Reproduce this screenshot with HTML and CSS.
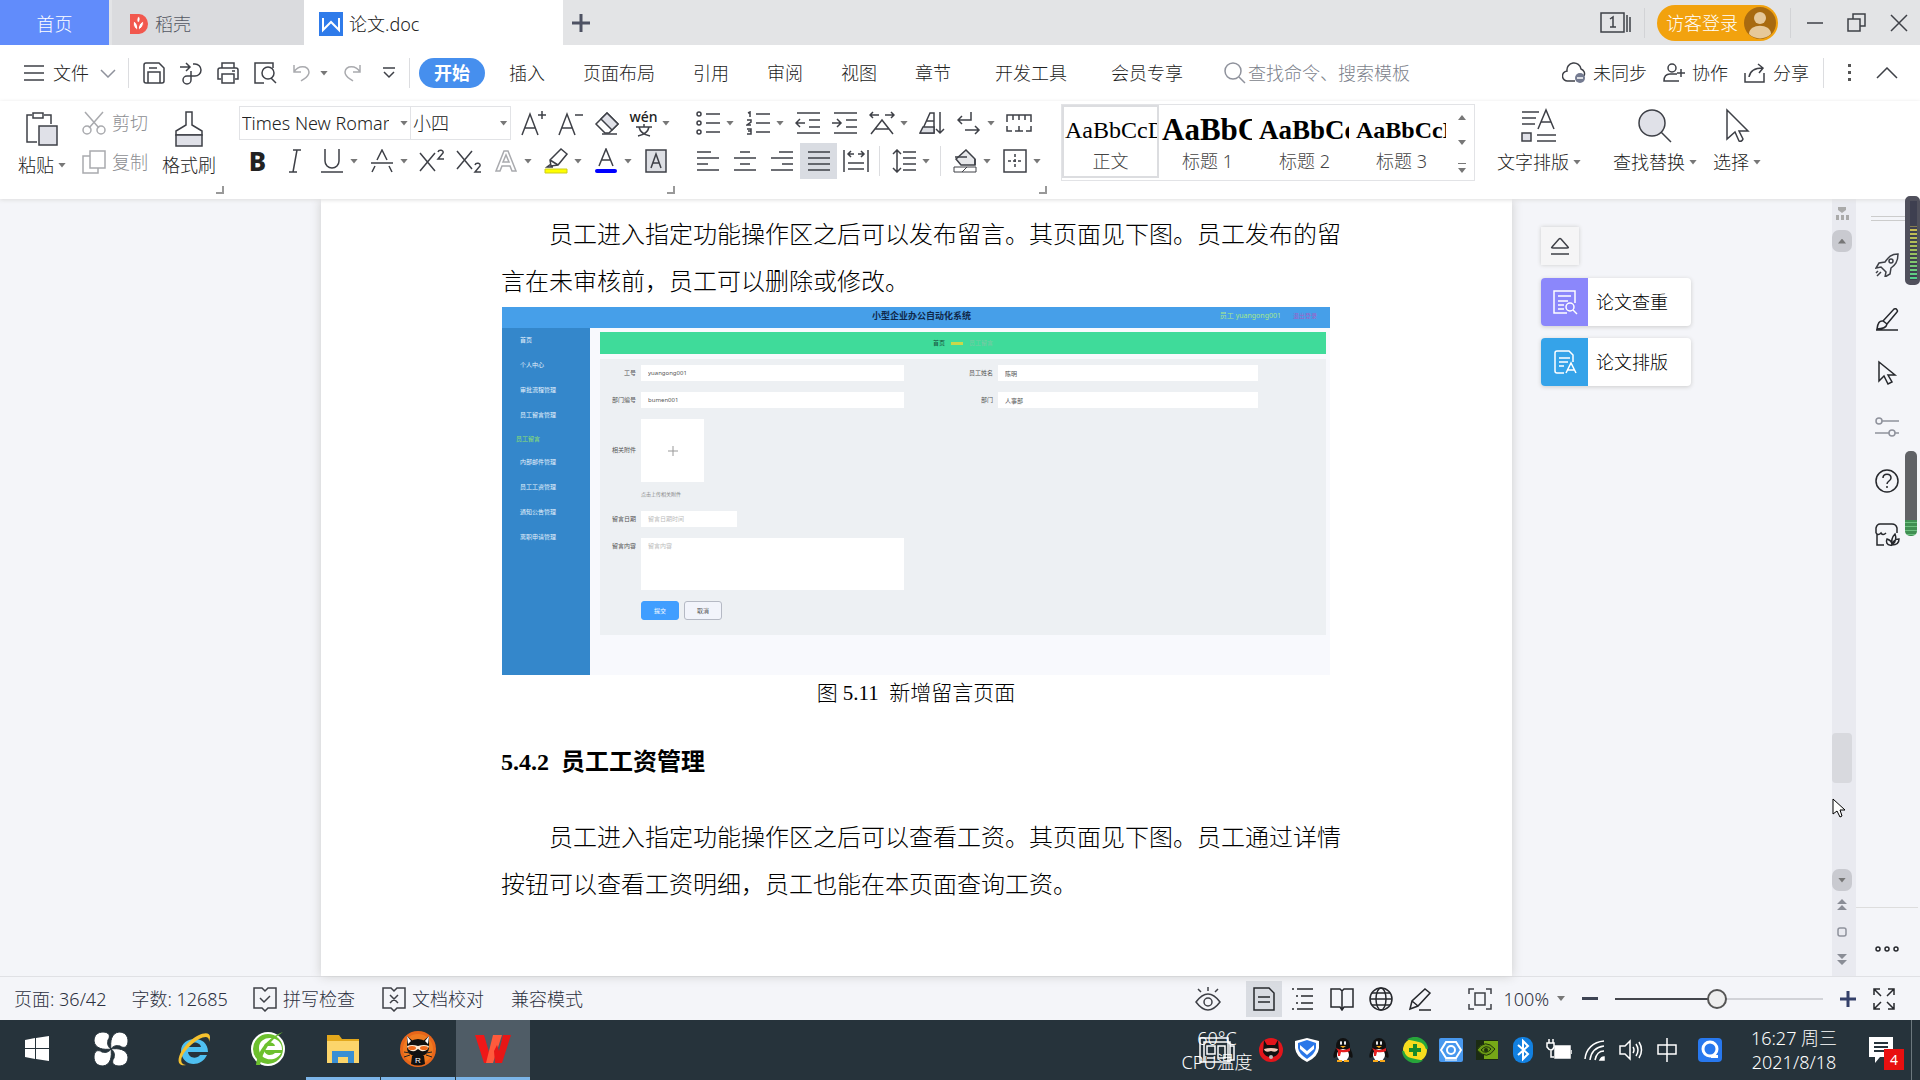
FILE: index.html
```html
<!DOCTYPE html>
<html lang="zh-CN">
<head>
  <meta charset="utf-8">
  <title>论文.doc</title>
  <link rel="stylesheet" href="styles.css">
</head>
<body>
  <header class="titlebar">
    <a class="tab tab-home" href="#">首页</a>
    <a class="tab tab-docer" href="#">
      <svg width="20" height="22" viewBox="0 0 20 22"><path d="M1 1h9a9 10 0 0 1 0 20H1z" fill="#f2584e"/><path d="M9 19V9M9 17c-5-2-5-6-4-9 3 2 4 5 4 9zM9 17c5-2 6-6 5-9-3 2-5 5-5 9zM9 10c-2-3-1-5 1-7 2 3 1 5-1 7z" fill="#fff" stroke="#f2584e"/></svg>
      稻壳
    </a>
    <a class="tab tab-doc" href="#">
      <svg width="24" height="24" viewBox="0 0 24 24"><path d="M0 0h24v24H0z" fill="#2f7bea"/><path d="M4 6v12l8-8 8 8V6" fill="none" stroke="#fff" stroke-width="2"/></svg>
      论文.doc
    </a>
    <button class="new-tab" aria-label="新建"><svg width="18" height="18" viewBox="0 0 18 18"><path d="M9 0v18M0 9h18" stroke="#4e5263" stroke-width="3"/></svg></button>
    <div class="window-tools">
      <button aria-label="窗口"><svg class="line" width="32" height="24" viewBox="0 0 32 24"><path d="M1 2h23v19H1zM27 4v17M30 6v15M10 8l3-2v10M10 16h6"/></svg></button>
      <span class="divider"></span>
      <button class="login">访客登录
        <svg width="32" height="32" viewBox="0 0 32 32"><circle cx="16" cy="16" r="16" fill="#a86a10"/><circle cx="16" cy="11" r="6" fill="#e6c89a"/><path d="M5 27c0-11 22-11 22 0a16 16 0 0 1-22 0z" fill="#e6c89a"/></svg>
      </button>
      <span class="divider"></span>
      <button class="win" aria-label="最小化"><svg class="line" width="18" height="18" viewBox="0 0 18 18"><path d="M1 9h16"/></svg></button>
      <button class="win" aria-label="还原"><svg class="line" width="20" height="20" viewBox="0 0 20 20"><path d="M1 6h12v12H1zM6 6V1h12v12h-5"/></svg></button>
      <button class="win" aria-label="关闭"><svg class="line" width="18" height="18" viewBox="0 0 18 18"><path d="M1 1l16 16M17 1L1 17"/></svg></button>
    </div>
  </header>

  <nav class="menubar">
    <button class="file">
      <svg class="line" width="22" height="18" viewBox="0 0 22 18"><path d="M1 2h20M1 9h20M1 16h20"/></svg>
      文件
      <svg class="line pale" width="16" height="9" viewBox="0 0 16 9"><path d="M1 1l7 7 7-7"/></svg>
    </button>
    <span class="divider"></span>
    <div class="quick">
      <button class="tool" aria-label="保存"><svg class="line" width="24" height="24" viewBox="0 0 24 24"><path d="M2 4q0-2 2-2h13l5 5v13q0 2-2 2H4q-2 0-2-2zM6 22v-11h12v11M7 7h8"/></svg></button>
      <button class="tool" aria-label="输出"><svg class="line" width="24" height="24" viewBox="0 0 24 24"><path d="M1 6h9M7 2l4 4-4 4M14 3h2a6 6 0 0 1 0 12H8a4 4 0 1 0 4 4v-9"/></svg></button>
      <button class="tool" aria-label="打印"><svg class="line" width="24" height="24" viewBox="0 0 24 24"><path d="M6 7V2h12v5M5 18H2V9q0-2 2-2h16q2 0 2 2v9h-3M6 13h12v9H6zM16 10h3"/></svg></button>
      <button class="tool" aria-label="打印预览"><svg class="line" width="24" height="24" viewBox="0 0 24 24"><path d="M20 7V2H2v20h9"/><circle cx="15" cy="12" r="6"/><path d="M18 17l5 5"/></svg></button>
      <button class="tool" aria-label="撤销"><svg class="line faint" width="20" height="20" viewBox="0 0 20 20"><path d="M2 2v7h7M2 9c4-7 14-7 15 0 0 5-4 6-8 9"/></svg></button><i class="caret"></i>
      <button class="tool" aria-label="恢复"><svg class="line faint" width="20" height="20" viewBox="0 0 20 20"><path d="M18 2v7h-7M18 9C14 2 4 2 3 9c0 5 4 6 8 9"/></svg></button>
      <button class="tool" aria-label="更多"><svg class="line" width="14" height="12" viewBox="0 0 14 12"><path d="M1 1h12M2 5l5 5 5-5"/></svg></button>
    </div>
    <span class="divider"></span>
    <div class="menus">
      <a class="active" href="#">开始</a>
      <a href="#">插入</a>
      <a href="#">页面布局</a>
      <a href="#">引用</a>
      <a href="#">审阅</a>
      <a href="#">视图</a>
      <a href="#">章节</a>
      <a class="wide" href="#">开发工具</a>
      <a class="wide" href="#">会员专享</a>
    </div>
    <label class="search">
      <svg class="line pale" width="22" height="22" viewBox="0 0 22 22"><circle cx="9" cy="9" r="8"/><path d="M15 15l6 6"/></svg>
      <input type="text" placeholder="查找命令、搜索模板" aria-label="查找命令">
    </label>
    <div class="share">
      <button><svg class="line" width="24" height="22" viewBox="0 0 24 22"><path d="M13 19H6A5 5 0 0 1 5 9a7 7 0 0 1 14-2 5 5 0 0 1 3 7"/><circle cx="18" cy="16" r="5" fill="#747b91" stroke="none"/><path d="M15 16h6" stroke="#fff"/></svg>未同步</button>
      <button><svg class="line" width="22" height="20" viewBox="0 0 22 20"><circle cx="9" cy="5" r="4"/><path d="M16 18H1q0-7 6-7h7M18 6v8M14 10h8"/></svg>协作</button>
      <button><svg class="line" width="22" height="20" viewBox="0 0 22 20"><path d="M1 10v9h19v-9M5 14c1-7 7-9 14-9M14 1l5 4-4 5"/></svg>分享</button>
    </div>
    <span class="divider"></span>
    <button class="dots" aria-label="选项"><svg width="4" height="18" viewBox="0 0 4 18"><path d="M0 0h3v3H0zM0 7h3v3H0zM0 14h3v3H0z" fill="#555"/></svg></button>
    <button class="fold" aria-label="收起"><svg class="line" width="22" height="12" viewBox="0 0 22 12"><path d="M1 11L11 1l10 10"/></svg></button>
  </nav>

  <section class="ribbon">
    <div class="clipboard">
      <button class="big">
        <svg class="line" width="34" height="36" viewBox="0 0 34 36"><path d="M7 4H2v27h10M19 4h7v9M8 2h10v5H8z"/><path d="M14 15h18v19H14z" fill="#e0e1e8"/></svg>
        <span>粘贴<i class="caret"></i></span>
      </button>
      <div class="stack">
        <button class="off"><svg class="line faint" width="24" height="24" viewBox="0 0 24 24"><path d="M3 1l14 16M21 1L7 17"/><circle cx="5" cy="19" r="4"/><circle cx="19" cy="19" r="4"/></svg>剪切</button>
        <button class="off"><svg class="line faint" width="24" height="24" viewBox="0 0 24 24"><path d="M8 1h15v17H8zM8 6H1v17h15v-5"/></svg>复制</button>
      </div>
      <button class="big brush">
        <svg class="line" width="34" height="36" viewBox="0 0 34 36"><path d="M14 1h6v13l10 6v4H4v-4l10-6z"/><path d="M4 24h26v11H4z" fill="#e0e1e8"/></svg>
        <span>格式刷</span>
      </button>
      <i class="corner"></i>
    </div>

    <div class="group font-group">
      <div class="row">
        <label class="combo combo-font"><select aria-label="字体"><option>Times New Roman</option></select><i class="caret"></i></label>
        <label class="combo combo-size"><select aria-label="字号"><option>小四</option></select><i class="caret"></i></label>
        <button class="tool" aria-label="增大字号"><svg class="line" width="26" height="26" viewBox="0 0 26 26"><path d="M2 25L10 4l8 21M5 18h10M18 5h8M22 1v8"/></svg></button>
        <button class="tool" aria-label="减小字号"><svg class="line" width="26" height="26" viewBox="0 0 26 26"><path d="M2 25L10 4l8 21M5 18h10M18 5h8"/></svg></button>
        <button class="tool" aria-label="清除格式"><svg class="line" width="26" height="26" viewBox="0 0 26 26"><path d="M13 3l11 11-9 9h-4l-9-9z"/><path d="M13 3l11 11-6 6L7 9z" fill="#e0e1e8"/><path d="M8 24h15"/></svg></button>
        <button class="tool pinyin" aria-label="拼音指南">wén<svg class="line" width="18" height="13" viewBox="0 0 18 13"><path d="M1 3h16M9 0v3M4 3c1 5 6 8 11 9M14 3C13 8 8 11 3 12"/></svg></button><i class="caret"></i>
      </div>
      <div class="row">
        <button class="tool bold">B</button>
        <button class="tool" aria-label="倾斜"><svg class="line" width="16" height="24" viewBox="0 0 16 24"><path d="M6 1h8M2 23h8M10 1L6 23"/></svg></button>
        <button class="tool" aria-label="下划线"><svg class="line" width="24" height="26" viewBox="0 0 24 26"><path d="M5 1v12a7 7 0 0 0 14 0V1M1 24h22"/></svg></button><i class="caret"></i>
        <button class="tool" aria-label="删除线"><svg class="line" width="24" height="24" viewBox="0 0 24 24"><path d="M7 11l5-10 5 10M1 14h22M5 17l-3 6M19 17l3 6"/></svg></button><i class="caret"></i>
        <button class="tool" aria-label="上标"><svg class="line" width="26" height="24" viewBox="0 0 26 24"><path d="M1 4l15 18M16 4L1 22M19 3c1-3 6-2 5 1l-5 6h6"/></svg></button>
        <button class="tool" aria-label="下标"><svg class="line" width="26" height="24" viewBox="0 0 26 24"><path d="M1 2l15 18M16 2L1 20M19 16c1-3 6-2 5 1l-5 6h6"/></svg></button>
        <button class="tool" aria-label="文字效果"><svg class="line faint" width="22" height="24" viewBox="0 0 22 24"><path d="M1 22L9 2h4l8 20h-4l-2-5H7l-2 5zM8 13h6L11 6z"/></svg></button><i class="caret"></i>
        <button class="tool" aria-label="突出显示"><svg class="line" width="26" height="26" viewBox="0 0 26 26"><path d="M7 12L18 1l6 5-9 11-7 1zM7 12l8 5M8 16l-4 3h6"/><path d="M2 21h22v4H2z" fill="#ff0" stroke="#cbcb20" stroke-width="1"/></svg></button><i class="caret"></i>
        <button class="tool" aria-label="字体颜色"><svg class="line" width="24" height="26" viewBox="0 0 24 26"><path d="M5 18L12 1l7 17M7 12h10"/><path class="ink" d="M3 23h18"/></svg></button><i class="caret"></i>
        <button class="tool" aria-label="字符底纹"><svg class="line" width="22" height="24" viewBox="0 0 22 24"><path d="M1 1h20v22H1z" fill="#dddfe4"/><path d="M6 19l5-14 5 14M8 14h6"/></svg></button>
      </div>
      <i class="corner"></i>
    </div>

    <div class="group para-group">
      <div class="row">
        <button class="tool" aria-label="项目符号"><svg class="line" width="24" height="24" viewBox="0 0 24 24"><circle cx="3" cy="3" r="2"/><circle cx="3" cy="12" r="2"/><circle cx="3" cy="21" r="2"/><path d="M10 3h14M10 12h14M10 21h14"/></svg></button><i class="caret"></i>
        <button class="tool" aria-label="编号"><svg class="line" width="24" height="24" viewBox="0 0 24 24"><path d="M2 2l2-1v5M1 9h4v2l-4 3h4M1 18h4v5H1M2 20h3M10 3h14M10 12h14M10 21h14"/></svg></button><i class="caret"></i>
        <button class="tool" aria-label="减少缩进"><svg class="line" width="26" height="24" viewBox="0 0 26 24"><path d="M2 2h23M14 9h11M14 16h11M2 22h23M10 12H1M5 8l-4 4 4 4"/></svg></button>
        <button class="tool" aria-label="增加缩进"><svg class="line" width="26" height="24" viewBox="0 0 26 24"><path d="M2 2h23M14 9h11M14 16h11M2 22h23M0 12h9M5 8l4 4-4 4"/></svg></button>
        <button class="tool" aria-label="中文版式"><svg class="line" width="26" height="24" viewBox="0 0 26 24"><path d="M1 4h9M4 1L1 4l3 3M16 4h9M22 1l3 3-3 3M2 23L13 9l11 14M6 18h14"/></svg></button><i class="caret"></i>
        <button class="tool" aria-label="排序"><svg class="line" width="26" height="24" viewBox="0 0 26 24"><path d="M2 22L11 2h4v20z"/><path d="M4 16h11v6H1z" fill="#dddfe4"/><path d="M8 10h7M21 1v21M17 18l4 4 4-4"/></svg></button>
        <button class="tool" aria-label="换行"><svg class="line" width="24" height="24" viewBox="0 0 24 24"><path d="M14 1v8H1M5 5L1 9l4 4M8 19h14M18 15l4 4-4 4"/></svg></button><i class="caret"></i>
        <button class="tool" aria-label="制表位"><svg class="line" width="26" height="18" viewBox="0 0 26 18"><path d="M1 8V1h24v7M7 1v5M13 1v5M19 1v5M1 12v5h5M25 12v5h-5M9 17h8M13 12v5"/></svg></button>
      </div>
      <div class="row">
        <button class="tool" aria-label="左对齐"><svg class="line" width="22" height="22" viewBox="0 0 22 22"><path d="M0 2h14M0 8h22M0 14h11M0 20h22"/></svg></button>
        <button class="tool" aria-label="居中"><svg class="line" width="22" height="22" viewBox="0 0 22 22"><path d="M6 2h10M0 8h22M6 14h10M0 20h22"/></svg></button>
        <button class="tool" aria-label="右对齐"><svg class="line" width="22" height="22" viewBox="0 0 22 22"><path d="M8 2h14M0 8h22M11 14h11M0 20h22"/></svg></button>
        <button class="tool pressed" aria-label="两端对齐"><svg class="line" width="22" height="22" viewBox="0 0 22 22"><path d="M0 2h22M0 8h22M0 14h22M0 20h22"/></svg></button>
        <button class="tool" aria-label="分散对齐"><svg class="line" width="26" height="22" viewBox="0 0 26 22"><path d="M1 0v22M25 0v22M5 13h16M5 19h16M5 4h6M8 1L5 4l3 3M15 4h6M18 1l3 3-3 3"/></svg></button>
        <span class="divider"></span>
        <button class="tool" aria-label="行距"><svg class="line" width="24" height="24" viewBox="0 0 24 24"><path d="M5 1v22M1 5l4-4 4 4M1 19l4 4 4-4M11 3h13M11 9h13M11 15h13M11 21h13"/></svg></button><i class="caret"></i>
        <span class="divider"></span>
        <button class="tool" aria-label="底纹"><svg class="line" width="24" height="24" viewBox="0 0 24 24"><path d="M3 10L13 1l9 9v6H8z" fill="#e6e7ea"/><path d="M2 8h12M22 10v6"/><path d="M1 18h22v5H1zM9 23l5-5" fill="#fff" stroke-width="1"/></svg></button><i class="caret"></i>
        <button class="tool" aria-label="边框"><svg class="line" width="24" height="24" viewBox="0 0 24 24"><path d="M1 1h22v22H1z"/><path d="M5 12h14M12 5v14" stroke-dasharray="3 2"/></svg></button><i class="caret"></i>
      </div>
      <i class="corner"></i>
    </div>

    <div class="gallery">
      <button class="style selected"><span class="preview">AaBbCcDd</span><span>正文</span></button>
      <button class="style h1"><span class="preview">AaBbCc</span><span>标题 1</span></button>
      <button class="style h2"><span class="preview">AaBbCc</span><span>标题 2</span></button>
      <button class="style h3"><span class="preview">AaBbCcD</span><span>标题 3</span></button>
      <div class="gallery-scroll">
        <button aria-label="上一行"><i class="caret up"></i></button>
        <button aria-label="下一行"><i class="caret"></i></button>
        <button aria-label="更多样式"><i class="caret more"></i></button>
      </div>
    </div>

    <div class="edit">
      <button class="big">
        <svg class="line" width="36" height="36" viewBox="0 0 36 36"><path d="M1 4h17M1 10h14M1 16h13M17 21l8-19 8 19M20 14h10M16 27h19M16 33h19"/><path d="M1 25h9v8H1z" fill="#e0e1e8"/></svg>
        <span>文字排版<i class="caret"></i></span>
      </button>
      <button class="big">
        <svg class="line" width="36" height="36" viewBox="0 0 36 36"><circle cx="15" cy="15" r="13" fill="#e0e1e8"/><path d="M24 24l10 10"/></svg>
        <span>查找替换<i class="caret"></i></span>
      </button>
      <button class="big">
        <svg class="line" width="36" height="36" viewBox="0 0 36 36"><path d="M8 2v29l8-7 4 9q3 1 4-2l-4-8h9z"/></svg>
        <span>选择<i class="caret"></i></span>
      </button>
    </div>
  </section>

  <main class="workspace">
    <div class="gutter"></div>
    <article class="page">
      <p>员工进入指定功能操作区之后可以发布留言。其页面见下图。员工发布的留言在未审核前，员工可以删除或修改。</p>
      <figure>
        <div class="oa">
          <div class="oa-head">
            <b>小型企业办公自动化系统</b>
            <span class="oa-user">员工 yuangong001</span>
            <a class="oa-exit" href="#">退出登录</a>
          </div>
          <ul class="oa-nav">
            <li>首页</li>
            <li>个人中心</li>
            <li>审批流程管理</li>
            <li>员工留言管理</li>
            <li class="on">员工留言</li>
            <li>内部邮件管理</li>
            <li>员工工资管理</li>
            <li>通知公告管理</li>
            <li>离职申请管理</li>
          </ul>
          <div class="oa-main">
            <div class="oa-crumb">首页 <i></i> <span>员工留言</span></div>
            <form class="oa-form">
              <label for="gonghao">工号</label>
              <input id="gonghao" value="yuangong001">
              <label for="xingming">员工姓名</label>
              <input id="xingming" value="陈明">
              <label for="bianhao">部门编号</label>
              <input id="bianhao" value="bumen001">
              <label for="bumen">部门</label>
              <input id="bumen" value="人事部">
              <label for="fujian">相关附件</label>
              <div class="oa-wide">
                <button type="button" class="oa-upload" id="fujian" aria-label="上传"><svg width="10" height="10" viewBox="0 0 10 10"><path d="M5 0v10M0 5h10" stroke="#999"/></svg></button>
                <small>点击上传相关附件</small>
              </div>
              <label for="riqi">留言日期</label>
              <div class="oa-wide"><input id="riqi" class="oa-date" placeholder="留言日期时间"></div>
              <label for="neirong">留言内容</label>
              <div class="oa-wide"><textarea id="neirong" placeholder="留言内容"></textarea></div>
              <div class="oa-buttons">
                <button type="button" class="oa-submit">提交</button>
                <button type="button">取消</button>
              </div>
            </form>
          </div>
        </div>
        <figcaption>图 5.11&nbsp; 新增留言页面</figcaption>
      </figure>
      <h3>5.4.2&nbsp; 员工工资管理</h3>
      <p>员工进入指定功能操作区之后可以查看工资。其页面见下图。员工通过详情按钮可以查看工资明细，员工也能在本页面查询工资。</p>
    </article>
    <aside class="panel">
      <button class="eject" aria-label="收起"><svg class="line" width="20" height="18" viewBox="0 0 20 18"><path d="M2 10q-1 1 1 1h14q2 0 1-1l-7-8q-1-1-2 0zM1 17h18"/></svg></button>
      <button class="card">
        <span class="card-icon violet"><svg class="line white" width="26" height="26" viewBox="0 0 26 26"><path d="M15 24H2V2h21v12M6 7h13M6 12h10M6 16h6M6 20h6"/><circle cx="18" cy="18" r="4"/><path d="M21 21l4 4"/></svg></span>论文查重
      </button>
      <button class="card">
        <span class="card-icon blue"><svg class="line white" width="26" height="26" viewBox="0 0 26 26"><path d="M12 24H5q-2 0-2-2V4q0-2 2-2h12l4 4v7M7 9h11M7 13h9M7 17h5M14 24l5-10 5 10M16 21h6"/></svg></span>论文排版
      </button>
    </aside>
    <div class="scrollbar">
      <svg class="ruler" width="14" height="14" viewBox="0 0 14 14"><path d="M3 0h8v3L7 6 3 3z" fill="#aaa"/><path d="M1 8h3v5H1zM6 8h3v5H6zM11 8h3v5h-3z" fill="#aaa"/></svg>
      <button class="knob" aria-label="向上"><i class="caret up"></i></button>
      <i class="thumb"></i>
      <button class="knob" aria-label="向下"><i class="caret"></i></button>
      <button aria-label="上一页"><svg width="10" height="12" viewBox="0 0 10 12"><path d="M0 5l5-5 5 5zM0 11l5-5 5 5z" fill="#8a8d96"/></svg></button>
      <button aria-label="浏览对象"><svg class="line pale" width="10" height="10" viewBox="0 0 10 10"><rect x="1" y="1" width="8" height="8" rx="2"/></svg></button>
      <button aria-label="下一页"><svg width="10" height="12" viewBox="0 0 10 12"><path d="M0 1l5 5 5-5zM0 7l5 5 5-5z" fill="#8a8d96"/></svg></button>
    </div>
    <aside class="sidebar">
      <i class="grip"></i>
      <button aria-label="助手"><svg class="line" width="24" height="24" viewBox="0 0 24 24"><path d="M23 1c-8 0-10 4-13 8L4 10l-3 5 5-1 5 5-1 5 5-3 1-6c4-3 7-6 7-14zM3 18l-2 2M6 19l-4 4"/><circle cx="16" cy="8" r="2"/></svg></button>
      <button aria-label="样式"><svg class="line dark" width="24" height="24" viewBox="0 0 24 24"><path d="M8 14L19 2q2-1 3 1 1 1 0 2L12 17M8 14q-5-1-6 8 9 0 10-5zM1 23h22"/></svg></button>
      <button aria-label="选择"><svg class="line dark" width="22" height="26" viewBox="0 0 22 26"><path d="M3 2v19l5-5 4 8 4-2-4-7h7z"/></svg></button>
      <button aria-label="属性"><svg class="line pale" width="26" height="22" viewBox="0 0 26 22"><circle cx="5" cy="5" r="3"/><circle cx="18" cy="17" r="3"/><path d="M8 5h17M1 17h14M21 17h4"/></svg></button>
      <button aria-label="帮助"><svg class="line dark" width="24" height="24" viewBox="0 0 24 24"><circle cx="12" cy="12" r="11"/><path d="M8 9c0-5 8-5 8 0 0 3-4 3-4 6M12 17v2"/></svg></button>
      <button aria-label="应用"><svg class="line dark" width="26" height="24" viewBox="0 0 26 24"><path d="M3 11v11h7M2 10V5q1-4 4-4h12q4 0 5 4v5M2 10q2 3 5 0 2 3 5 0"/><path d="M18 22c-6 1-6-4-5-6 3 1 5 3 5 6zM18 22c-1-5 0-8 3-11 2 5 1 8-3 11zM18 22c1-4 4-6 7-6 0 4-3 6-7 6z"/></svg></button>
      <button class="more" aria-label="更多"><svg class="line dark" width="26" height="8" viewBox="0 0 26 8"><circle cx="4" cy="4" r="2"/><circle cx="13" cy="4" r="2"/><circle cx="22" cy="4" r="2"/></svg></button>
    </aside>
    <i class="meter meter-top"></i>
    <i class="meter meter-low"></i>
    <svg class="pointer" width="14" height="20" viewBox="0 0 14 20"><path d="M1 1v15l4-3 3 6 2-1-2-6h5z" fill="#fff" stroke="#000"/></svg>
  </main>

  <footer class="status">
    <span class="count">页面: 36/42</span>
    <span class="count">字数: 12685</span>
    <button class="check"><svg class="line" width="24" height="26" viewBox="0 0 24 26"><path d="M1 2h8l3 3 3-3h8v20h-8l-3 3-3-3H1zM7 12l4 4 6-6"/></svg>拼写检查</button>
    <button class="check"><svg class="line" width="24" height="26" viewBox="0 0 24 26"><path d="M1 2h8l3 3 3-3h8v20h-8l-3 3-3-3H1zM8 9l8 8M16 9l-8 8"/></svg>文档校对</button>
    <span>兼容模式</span>
    <div class="views">
      <button class="eye" aria-label="护眼模式"><svg class="line" width="26" height="26" viewBox="0 0 26 26"><path d="M1 16q12-16 24 0-12 16-24 0zM13 1v4M3 3l3 3M23 3l-3 3"/><circle cx="13" cy="16" r="4"/></svg></button>
      <button class="pressed" aria-label="页面视图"><svg class="line dark" width="24" height="24" viewBox="0 0 24 24"><path d="M2 1h15l5 5v17H2zM6 10h12M6 15h12"/></svg></button>
      <button aria-label="大纲"><svg class="line dark" width="24" height="24" viewBox="0 0 24 24"><path d="M1 2h2M6 2h16M5 9h2M10 9h12M5 16h2M10 16h12M1 22h2M6 22h16"/></svg></button>
      <button aria-label="阅读版式"><svg class="line dark" width="24" height="24" viewBox="0 0 24 24"><path d="M1 2h9l2 2 2-2h9v18h-9l-2 3-2-3H1zM12 4v18"/></svg></button>
      <button aria-label="Web版式"><svg class="line dark" width="24" height="24" viewBox="0 0 24 24"><circle cx="12" cy="12" r="11"/><ellipse cx="12" cy="12" rx="5" ry="11"/><path d="M1 12h22M3 6h18M3 18h18"/></svg></button>
      <button aria-label="写作模式"><svg class="line dark" width="24" height="24" viewBox="0 0 24 24"><path d="M2 22l2-8L17 2l5 4L10 19zM4 14l6 5M11 23h12"/></svg></button>
    </div>
    <button class="fit" aria-label="适合页面"><svg class="line" width="24" height="24" viewBox="0 0 24 24"><path d="M1 7V2h5M18 2h5v5M23 17v5h-5M6 22H1v-5M7 6h10v12H7z"/></svg></button>
    <button class="percent">100%<i class="caret"></i></button>
    <button aria-label="缩小"><svg width="16" height="4" viewBox="0 0 16 4"><path d="M0 0h16v3H0z" fill="#3d4454"/></svg></button>
    <input class="zoom" type="range" value="49" aria-label="缩放">
    <button aria-label="放大"><svg width="16" height="16" viewBox="0 0 16 16"><path d="M8 0v16M0 8h16" stroke="#34406a" stroke-width="3"/></svg></button>
    <button class="full" aria-label="全屏"><svg class="line dark" width="24" height="24" viewBox="0 0 24 24"><path d="M2 8V2h6M2 2l7 7M16 2h6v6M22 2l-7 7M22 16v6h-6M22 22l-7-7M8 22H2v-6M2 22l7-7"/></svg></button>
  </footer>

  <div class="taskbar">
    <div class="apps">
      <button aria-label="开始"><svg width="26" height="26" viewBox="0 0 26 26"><path d="M1 4l10-2v10H1zM12 2l13-2v12H12zM1 13h10v10L1 21zM12 13h13v12l-13-2z" fill="#fff"/></svg></button>
      <button class="swirl" aria-label="搜索"><svg width="36" height="36" viewBox="0 0 36 36"><g fill="#fff" stroke="#26333b"><path d="M18 18C11 19 2 18 1 10 1 4 5 1 10 1 16 1 18 5 15 9 14 13 15 16 18 18z"/><path d="M18 18C11 19 2 18 1 10 1 4 5 1 10 1 16 1 18 5 15 9 14 13 15 16 18 18z" transform="rotate(90 18 18)"/><path d="M18 18C11 19 2 18 1 10 1 4 5 1 10 1 16 1 18 5 15 9 14 13 15 16 18 18z" transform="rotate(180 18 18)"/><path d="M18 18C11 19 2 18 1 10 1 4 5 1 10 1 16 1 18 5 15 9 14 13 15 16 18 18z" transform="rotate(270 18 18)"/></g></svg></button>
      <button aria-label="Internet Explorer"><svg width="36" height="36" viewBox="0 0 36 36"><path d="M32 21H12c1 7 9 7 12 3h7C25 37 6 36 5 20 5 5 32 3 32 21zM12 16h13c-1-6-12-6-13 0z" fill="#4fc0f0"/><path d="M10 34C-3 36 3 20 13 11 24 1 38-2 33 11c1-8-8-6-18 3C6 22 1 33 10 34z" fill="#f5c12e"/></svg></button>
      <button aria-label="360浏览器"><svg width="36" height="36" viewBox="0 0 36 36"><circle cx="18" cy="18" r="16" fill="#6cc02e" stroke="#fff" stroke-width="2"/><path d="M32 19H14c1 6 8 6 11 3h6c-5 10-22 8-22-5 0-14 24-13 23 2zM14 15h11c-1-5-10-5-11 0z" fill="#fff"/><path d="M6 34c1-12 10-27 27-33-13 8-20 19-23 33z" fill="#6cc02e"/></svg></button>
      <button class="open" aria-label="文件资源管理器"><svg width="34" height="30" viewBox="0 0 34 30"><path d="M1 1h12l3 4h17v24H1z" fill="#e3a81c"/><path d="M1 7h32v22H1z" fill="#fcd56b"/><path d="M6 29V17h22v12h-6v-6H12v6z" fill="#3a8fd4"/></svg></button>
      <button class="open" aria-label="浣熊"><svg width="38" height="38" viewBox="0 0 38 38"><circle cx="19" cy="19" r="18" fill="#e8661a"/><circle cx="19" cy="19" r="15" fill="#f07b20"/><ellipse cx="19" cy="18" rx="11" ry="9" fill="#111"/><path d="M8 6l6 5-6 6zM30 6l-6 5 6 6zM13 26h12l1 8q-7 3-14 0z" fill="#111"/><path d="M8 6l4 5-3 3zM30 6l-4 5 3 3z" fill="#fff"/><path d="M8 16q5-2 11 0 6-2 11 0-1 6-8 5l-3-2-3 2q-7 1-8-5z" fill="#ffe9d0"/><ellipse cx="13" cy="18" rx="4" ry="2" fill="#f06a1c"/><ellipse cx="25" cy="18" rx="4" ry="2" fill="#f06a1c"/><path d="M5 22l6 1M5 27l6-2M33 22l-6 1M33 27l-6-2" stroke="#222"/><text x="16" y="33" font-size="8" font-family="Liberation Sans" fill="#fff">R</text></svg></button>
      <button class="open current" aria-label="WPS"><svg width="36" height="30" viewBox="0 0 36 30"><path d="M0 1h9l5 17 5-9 3 6-7 14H9z" fill="#f01818"/><path d="M18 1h9l-9 28h-7z" fill="#ff5a3c"/><path d="M28 1h8l-9 28h-7l-1-12 3-6 2 6z" fill="#e81616"/></svg></button>
    </div>
    <div class="temperature">
      <span>60°C</span><span>CPU温度</span>
      <svg class="line white" width="36" height="26" viewBox="0 0 36 26"><path d="M1 1h28v24H1zM5 5h26v20H5zM8 9h8v8H8zM19 9h7v12h-7zM8 21h8M31 9h4v14h-4"/></svg>
    </div>
    <div class="tray">
      <svg width="26" height="26" viewBox="0 0 26 26"><circle cx="13" cy="13" r="12" fill="#e3151b"/><path d="M6 3l3 5h8l3-5 1 12q-2 5-8 5-6 0-8-5z" fill="#111"/><path d="M6 12q7-2 14 0-1 4-7 2-6 2-7-2z" fill="#f4c9b8"/><circle cx="13" cy="20" r="2" fill="#bbb"/></svg>
      <svg width="26" height="26" viewBox="0 0 26 26"><path d="M13 1l12 3v7q-1 9-12 14Q2 20 1 11V4z" fill="#fff"/><path d="M13 3l9 3v5q-1 6-9 11-8-5-9-11V6z" fill="#2b77e8"/><path d="M6 8l7 6 7-6v4l-7 6-7-6z" fill="#fff"/></svg>
      <svg width="20" height="26" viewBox="0 0 20 26"><ellipse cx="10" cy="9" rx="7" ry="8" fill="#111"/><path d="M3 11q-4 8-2 10l4-2h10l4 2q2-2-2-10z" fill="#111"/><ellipse cx="10" cy="18" rx="6" ry="6" fill="#fff"/><ellipse cx="8" cy="6" rx="1" ry="2" fill="#fff"/><ellipse cx="12" cy="6" rx="1" ry="2" fill="#fff"/><path d="M7 9h6l-3 2z" fill="#f8a818"/><path d="M3 11q7 4 14 0v3q-4 2-9 1l-1 4H5v-5z" fill="#e62020"/><path d="M4 23h5v2H4zM11 23h5v2h-5z" fill="#f8a818"/></svg>
      <svg width="20" height="26" viewBox="0 0 20 26"><ellipse cx="10" cy="9" rx="7" ry="8" fill="#111"/><path d="M3 11q-4 8-2 10l4-2h10l4 2q2-2-2-10z" fill="#111"/><ellipse cx="10" cy="18" rx="6" ry="6" fill="#fff"/><ellipse cx="8" cy="6" rx="1" ry="2" fill="#fff"/><ellipse cx="12" cy="6" rx="1" ry="2" fill="#fff"/><path d="M7 9h6l-3 2z" fill="#f8a818"/><path d="M3 11q7 4 14 0v3q-4 2-9 1l-1 4H5v-5z" fill="#e62020"/><path d="M4 23h5v2H4zM11 23h5v2h-5z" fill="#f8a818"/></svg>
      <svg width="26" height="26" viewBox="0 0 26 26"><circle cx="13" cy="13" r="12" fill="#f7dc1e"/><path d="M8 2A12 12 0 0 1 25 12q-2-7-8-8-4-1-9-2zM18 24A12 12 0 0 1 1 14q2 7 8 8 4 1 9 2z" fill="#27a53a" stroke="#27a53a" stroke-width="2"/><path d="M13 7v12M7 13h12" stroke="#178a2a" stroke-width="4"/></svg>
      <svg width="26" height="26" viewBox="0 0 26 26"><path d="M1 3q0-2 2-2h20q2 0 2 2v20q0 2-2 2H3q-2 0-2-2z" fill="#4898ee"/><path d="M8 5h10l5 8-5 8H8l-5-8z" fill="none" stroke="#fff" stroke-width="2"/><circle cx="13" cy="13" r="4" fill="none" stroke="#fff" stroke-width="2"/><path d="M7 23h12" stroke="#fff"/></svg>
      <svg width="24" height="24" viewBox="0 0 24 24"><path d="M1 2h22v20H1z" fill="#1b2b12"/><path d="M9 3h14v18H9z" fill="#76a817"/><path d="M2 12q8-12 18-1-8 12-18 1z" fill="#6a9a15" stroke="#20330b"/><path d="M6 12q5-6 10-1-5 6-10 1z" fill="none" stroke="#20330b"/><circle cx="11" cy="12" r="2" fill="#20330b"/></svg>
      <svg width="20" height="26" viewBox="0 0 20 26"><rect width="20" height="26" rx="9" fill="#1280e0"/><path d="M5 8l10 9-5 5V4l5 5-10 9" fill="none" stroke="#fff" stroke-width="2"/></svg>
      <svg class="line white" width="26" height="24" viewBox="0 0 26 24"><path d="M9 8h15v12H9z" fill="#fff"/><path d="M1 5h7v4q-1 3-3 3t-4-3zM3 1v4M7 1v4M5 12v7h3M26 12v4"/></svg>
      <svg class="line white" width="22" height="24" viewBox="0 0 22 24"><path d="M1 21C2 11 9 4 20 3M6 22C7 14 12 9 20 8M11 22c1-5 4-9 9-9"/><path d="M16 22c1-2 2-3 4-3v3z" fill="#fff"/></svg>
      <svg class="line white" width="24" height="22" viewBox="0 0 24 22"><path d="M1 7h5l5-5v18l-5-5H1zM14 8q2 3 0 6M17 5q4 6 0 12M20 3q5 8 0 16"/></svg>
      <svg class="line white" width="20" height="26" viewBox="0 0 20 26"><path d="M1 8h18v9H1zM10 1v24"/></svg>
      <svg width="26" height="26" viewBox="0 0 26 26"><rect x="1" y="1" width="24" height="24" rx="4" fill="#2878ee"/><circle cx="13" cy="12" r="7" fill="none" stroke="#fff" stroke-width="3"/><path d="M14 18h7v3h-7z" fill="#fff"/></svg>
    </div>
    <time class="clock">16:27 周三<br>2021/8/18</time>
    <button class="notice" aria-label="通知"><svg width="26" height="28" viewBox="0 0 26 28"><path d="M1 1h24v20H12l-5 6v-6H1z" fill="#fff"/><path d="M6 7h14M6 11h14M6 15h10" stroke="#26333b" stroke-width="2"/></svg><b>4</b></button>
  </div>
</body>
</html>
```
FILE: styles.css
```css
* {
  box-sizing: border-box;
}

body {
  margin: 0;
  height: 100vh;
  display: flex;
  flex-direction: column;
  overflow: hidden;
  background: #f4f5f9;
  color: #222;
  font-family: "Noto Sans", "Noto Sans CJK SC", sans-serif;
  font-size: 18px;
  font-weight: 300;
  line-height: 24px;
}

a {
  color: inherit;
  text-decoration: none;
}

button,
input,
select,
textarea {
  margin: 0;
  padding: 0;
  border: 0;
  background: none;
  color: inherit;
  font: inherit;
}

button {
  display: flex;
  align-items: center;
  justify-content: center;
  white-space: nowrap;
}

svg {
  display: block;
  flex: none;
}

.line {
  fill: none;
  stroke: #3e4047;
  stroke-width: 1.5;
}

.line.dark {
  stroke: #26282d;
}

.line.pale {
  stroke: #8f929c;
}

.line.faint {
  stroke: #a9aaae;
}

.line.white {
  stroke: #fff;
}

.ink {
  stroke: #00f;
  stroke-width: 4;
  stroke-linecap: round;
}

.divider {
  width: 1px;
  height: 30px;
  background: #dcdde0;
}

.caret {
  flex: none;
  width: 13px;
  height: 5px;
}

.caret::before {
  content: "";
  display: block;
  width: 8px;
  height: 5px;
  background: #777;
  clip-path: polygon(0 0, 100% 0, 50% 100%);
}

.caret.up::before {
  clip-path: polygon(50% 0, 100% 100%, 0 100%);
}

/* title bar */
.titlebar {
  display: flex;
  flex: none;
  height: 45px;
  background: #e3e4e6;
}

.tab {
  display: flex;
  align-items: center;
  gap: 6px;
  padding-top: 2px;
}

.tab-home {
  justify-content: center;
  width: 109px;
  background: #618cfb;
  color: #fff;
}

.tab-docer {
  width: 192px;
  margin-left: 3px;
  padding-left: 17px;
  background: #dadbde;
  color: #555863;
}

.tab-doc {
  width: 259px;
  padding-left: 15px;
  background: #fff;
}

.new-tab {
  width: 36px;
}

.window-tools {
  display: flex;
  align-items: center;
  margin-left: auto;
}

.window-tools .divider {
  margin: 0 12px;
  background: #d2d3d6;
}

.window-tools .login + .divider {
  margin-right: 3px;
}

.window-tools .win {
  width: 42px;
}

.login {
  gap: 6px;
  height: 36px;
  padding: 0 2px 0 9px;
  border-radius: 18px;
  background: #f2a20e;
  color: #fff;
}

/* menu row */
.menubar {
  display: flex;
  flex: none;
  align-items: center;
  height: 56px;
  background: #fff;
}

.file {
  gap: 8px;
  padding: 0 12px 0 23px;
}

.file .pale {
  margin-left: 3px;
}

.quick {
  display: flex;
  align-items: center;
  padding: 0 2px 0 6px;
}

.tool {
  width: 37px;
  height: 36px;
}

.menus {
  display: flex;
  align-items: center;
  gap: 38px;
  margin-left: 9px;
}

.menus .active {
  height: 30px;
  margin-right: -14px;
  padding: 3px 15px;
  border-radius: 15px;
  background: #468fee;
  color: #fff;
  font-weight: 700;
}

.menus .wide {
  margin-left: 6px;
}

.search {
  display: flex;
  align-items: center;
  gap: 2px;
  margin-left: 41px;
}

.search input {
  width: 170px;
}

.search input::placeholder {
  color: #7c7f8b;
  opacity: 1;
}

.share {
  display: flex;
  gap: 16px;
  margin: 0 14px 0 auto;
}

.share button {
  gap: 7px;
}

.dots {
  width: 52px;
}

.fold {
  margin-right: 22px;
}

/* ribbon */
.ribbon {
  display: flex;
  flex: none;
  align-items: flex-start;
  height: 98px;
  padding-top: 3px;
  background: #fff;
  box-shadow: 0 1px 4px #ddd;
  z-index: 1;
}

.clipboard {
  position: relative;
  display: flex;
  width: 239px;
  padding-left: 18px;
}

.big {
  flex-direction: column;
  gap: 6px;
  padding-top: 4px;
}

.big span {
  display: flex;
  align-items: center;
}

.big .caret {
  margin-left: 4px;
  width: 8px;
}

.stack {
  display: flex;
  flex-direction: column;
  gap: 2px;
  margin: 0 14px 0 16px;
}

.off {
  gap: 6px;
  height: 37px;
  color: #8d8e92;
}

.corner {
  position: absolute;
  right: 15px;
  top: 82px;
  width: 8px;
  height: 8px;
  border: solid #999;
  border-width: 0 2px 2px 0;
}

.group {
  position: relative;
}

.group .corner {
  right: 0;
}

.font-group {
  width: 436px;
  margin-right: 14px;
}

.para-group {
  width: 358px;
}

.row {
  display: flex;
  align-items: center;
  height: 38px;
}

.row .divider {
  margin: 0 5px;
}

.combo {
  display: flex;
  align-items: center;
  height: 34px;
  border: 1px solid #e2e3e6;
}

.combo select {
  flex: 1;
  min-width: 0;
  padding-left: 2px;
  appearance: none;
  text-overflow: clip;
}

.combo .caret {
  width: 10px;
  margin-left: 11px;
}

.combo-font {
  width: 172px;
}

.combo-size {
  width: 100px;
  margin-right: 4px;
  border-left: 0;
}

.pinyin {
  flex-direction: column;
  font-size: 14px;
  font-weight: 500;
  line-height: 14px;
}

.bold {
  font-size: 26px;
  font-weight: 800;
}

.pressed {
  background: #d9dce2;
}

.gallery {
  display: flex;
  height: 77px;
  margin-left: 14px;
  border: 1px solid #e2e3e6;
}

.style {
  flex-direction: column;
  gap: 4px;
  width: 97px;
  height: 73px;
  border: 2px solid transparent;
  color: #444;
}

.style.selected {
  border-color: #dcdde0;
}

.preview {
  align-self: stretch;
  height: 34px;
  overflow: hidden;
  padding-left: 1px;
  color: #000;
  font-family: "Liberation Serif", serif;
  font-size: 24px;
  font-weight: 400;
  line-height: 38px;
  text-align: left;
}

.h1 .preview,
.h2 .preview,
.h3 .preview {
  margin-right: 2px;
  font-weight: 700;
}

.h1 .preview {
  font-size: 31px;
}

.h2 .preview {
  font-size: 27px;
}

.gallery-scroll {
  display: flex;
  flex-direction: column;
  width: 24px;
}

.gallery-scroll button {
  flex: 1;
}

.gallery-scroll .caret {
  width: 8px;
}

.caret.more {
  height: 9px;
  padding-top: 4px;
  border-top: 1px solid #777;
}

.edit {
  display: flex;
  gap: 32px;
  margin-left: 22px;
}

.edit .big:last-child {
  margin-left: -16px;
}

/* document */
.workspace {
  position: relative;
  display: flex;
  flex: 1;
  min-height: 0;
  border-bottom: 1px solid #e0e1e5;
}

.gutter {
  width: 321px;
}

.page {
  flex: 1;
  min-width: 0;
  padding: 13px 170px 0 180px;
  background: #fff;
  box-shadow: 0 0 10px #ccc;
  color: #000;
  font-family: "Liberation Serif", "Noto Sans CJK SC", serif;
}

.page p {
  margin: 0;
  font-size: 24px;
  line-height: 47px;
  text-indent: 48px;
}

.page figure {
  margin: 1px 12px 0 1px;
  text-align: center;
}

.page figcaption {
  font-size: 21px;
  line-height: 36px;
}

.page h3 {
  margin: 33px 0 35px;
  font-size: 24px;
  line-height: 36px;
}

.oa {
  display: grid;
  grid-template: 21px 1fr / 88px 1fr;
  height: 368px;
  background: #f8f9fd;
  color: #555;
  font-family: "Noto Sans", "Noto Sans CJK SC", sans-serif;
  font-size: 6px;
  font-weight: 400;
  line-height: 8px;
  text-align: left;
}

.oa-head {
  grid-column: 1 / 3;
  display: grid;
  grid-template-columns: 1fr auto 1fr auto auto;
  align-items: center;
  padding: 0 13px 4px 0;
  background: #469fe9;
}

.oa-head b {
  grid-column: 2;
  margin-left: 121px;
  color: #10284a;
  font-size: 9px;
}

.oa-user {
  grid-column: 4;
  color: #a5e88a;
  font-size: 7px;
}

.oa-exit {
  grid-column: 5;
  margin-left: 12px;
  color: #a060c8;
}

.oa-nav {
  margin: 0;
  padding: 0 0 0 18px;
  background: #3487cb;
  color: #e6f2fb;
  list-style: none;
  line-height: 25px;
}

.oa-nav .on {
  margin-left: -4px;
  color: #8fe070;
  line-height: 22px;
}

.oa-main {
  padding: 4px 4px 0 10px;
}

.oa-crumb {
  display: flex;
  align-items: center;
  justify-content: center;
  gap: 6px;
  height: 22px;
  background: #3fdb9a;
  color: #17503a;
}

.oa-crumb i {
  width: 12px;
  height: 3px;
  background: #c9d84a;
}

.oa-crumb span {
  color: #7cc9a4;
}

.oa-form {
  display: grid;
  grid-template-columns: 36px 263px 84px 260px;
  column-gap: 5px;
  row-gap: 11px;
  margin-top: 5px;
  padding: 6px 0 15px;
  background: #edf0f3;
}

.oa-form label {
  padding-top: 4px;
  text-align: right;
}

.oa-form input,
.oa-form textarea {
  display: block;
  width: 100%;
  height: 16px;
  padding: 0 7px;
  background: #fff;
}

.oa-form textarea {
  height: 52px;
  padding-top: 4px;
  resize: none;
}

.oa-form ::placeholder {
  color: #bbb;
}

.oa-form .oa-date {
  width: 96px;
}

.oa-wide {
  grid-column: 2 / 5;
}

.oa-wide textarea {
  width: 263px;
}

.oa-upload {
  width: 63px;
  height: 63px;
  margin-bottom: 8px;
  background: #fff;
}

.oa-wide small {
  display: block;
  margin-bottom: 2px;
  color: #888;
  font-size: 5px;
}

.oa-form label[for="fujian"] {
  padding-top: 27px;
}

.oa-buttons {
  grid-column: 2 / 5;
  display: flex;
  gap: 5px;
}

.oa-buttons button {
  width: 38px;
  height: 19px;
  border: 1px solid #b5b9c4;
  border-radius: 3px;
  background: #f2f4fb;
}

.oa-buttons .oa-submit {
  border-color: #409eff;
  background: #409eff;
  color: #fff;
}

.panel {
  width: 320px;
  padding: 28px 0 0 29px;
}

.eject {
  width: 38px;
  height: 38px;
  margin-bottom: 13px;
  background: #f5f5f6;
  box-shadow: 0 0 4px #ccc;
}

.card {
  justify-content: flex-start;
  gap: 8px;
  width: 150px;
  height: 48px;
  margin-bottom: 12px;
  border-radius: 4px;
  background: #fff;
  box-shadow: 0 1px 4px #ccc;
  color: #000;
  overflow: hidden;
}

.card-icon {
  display: grid;
  place-items: center;
  width: 47px;
  height: 48px;
}

.card-icon.violet {
  background: #8b87fb;
}

.card-icon.blue {
  background: #35a3e9;
}

.scrollbar {
  display: flex;
  flex-direction: column;
  align-items: center;
  width: 24px;
  padding: 8px 4px 4px 0;
  background: #e9eaf0;
}

.scrollbar .ruler {
  margin-bottom: 9px;
}

.scrollbar button {
  height: 27px;
}

.scrollbar .knob {
  width: 20px;
  height: 22px;
  border-radius: 7px;
  background: #c9cad0;
}

.scrollbar .caret {
  width: 8px;
}

.thumb {
  width: 20px;
  height: 50px;
  margin: auto 0 86px;
  border-radius: 4px;
  background: #d8d9de;
}

.sidebar {
  display: flex;
  flex-direction: column;
  width: 64px;
  padding-top: 17px;
}

.grip {
  width: 34px;
  height: 5px;
  margin: 0 0 17px 15px;
  border: solid #ccc;
  border-width: 1px 0;
}

.sidebar button {
  width: 62px;
  height: 54px;
}

.sidebar .more {
  height: 69px;
  margin-top: auto;
  padding-top: 14px;
  border-top: 1px solid #ddd;
}

.meter {
  position: absolute;
  width: 12px;
  border-radius: 5px;
}

.meter-top {
  top: -3px;
  right: 0;
  z-index: 2;
  width: 15px;
  height: 89px;
  border: 5px solid #50505c;
  border-right-width: 3px;
  background: repeating-linear-gradient(transparent 0 2px, #3e3f50 2px 4px), linear-gradient(#3e3f50 25px, #cdbb52 26px, #9fbe5a 50px, #4fd08d);
}

.meter-low {
  top: 252px;
  right: 3px;
  height: 85px;
  background: linear-gradient(#606266 69px, transparent 69px), repeating-linear-gradient(#3f8f52 0 3px, #6cc080 3px 4px);
}

.pointer {
  position: absolute;
  top: 599px;
  right: 74px;
}

/* status bar */
.status {
  display: flex;
  flex: none;
  align-items: center;
  height: 43px;
  padding: 0 24px 0 14px;
  color: #2c3040;
}

.count {
  margin-right: 25px;
}

.check {
  gap: 6px;
  margin-right: 27px;
}

.views {
  display: flex;
  align-items: center;
  margin-left: auto;
}

.views button {
  width: 36px;
  height: 36px;
  margin-right: 3px;
}

.views .eye {
  margin-right: 20px;
}

.fit {
  margin: 0 12px 0 27px;
}

.percent {
  margin-right: 12px;
}

.percent .caret {
  margin-left: 8px;
}

.zoom {
  width: 208px;
  height: 20px;
  margin: 0 17px;
  appearance: none;
  background: linear-gradient(90deg, #44464d 50%, #d2d3d8 50%) center / 100% 2px no-repeat;
}

.zoom::-webkit-slider-thumb {
  appearance: none;
  width: 20px;
  height: 20px;
  border: 2px solid #555;
  border-radius: 50%;
  background: #eee;
}

.full {
  margin-left: 16px;
}

/* taskbar */
.taskbar {
  display: flex;
  flex: none;
  height: 60px;
  background: #26333b;
  color: #fff;
}

.apps {
  display: flex;
}

.apps button {
  width: 74px;
  border-bottom: 3px solid transparent;
}

.apps .swirl {
  margin-right: 9px;
}

.apps .open {
  margin-left: 1px;
  border-color: #7cb5e8;
}

.apps .current {
  background: #4f5c66;
}

.temperature {
  position: relative;
  display: flex;
  flex-direction: column;
  align-items: center;
  justify-content: center;
  width: 72px;
  margin-left: auto;
}

.temperature svg {
  position: absolute;
  top: 17px;
  left: 18px;
}

.tray {
  display: grid;
  grid-template-columns: repeat(12, 36px) 50px;
  place-items: center;
}

.clock {
  align-self: center;
  width: 118px;
  margin-right: 15px;
  text-align: center;
}

.notice {
  position: relative;
  width: 44px;
  margin-right: 8px;
  border-right: 1px solid #6c787e;
  justify-content: flex-start;
}

.notice b {
  position: absolute;
  left: 16px;
  bottom: 10px;
  width: 20px;
  height: 21px;
  background: #e81010;
  font-size: 14px;
  font-weight: 400;
  line-height: 21px;
}
```
